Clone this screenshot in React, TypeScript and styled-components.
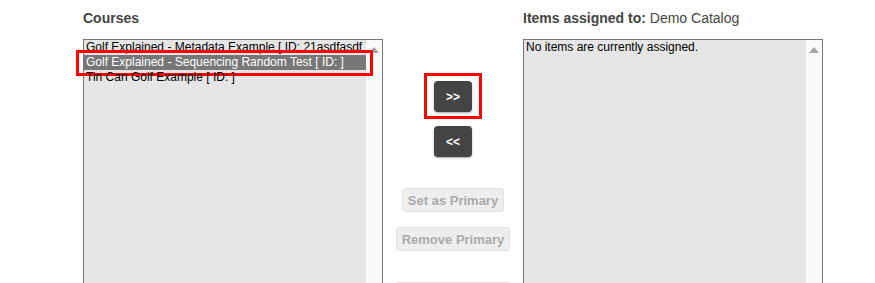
import styled, { createGlobalStyle } from 'styled-components'

const courses = [
  { id: 1, label: 'Golf Explained - Metadata Example [ ID: 21asdfasdf ]' },
  { id: 2, label: 'Golf Explained - Sequencing Random Test [ ID: ]', selected: true },
  { id: 3, label: 'Tin Can Golf Example [ ID: ]' },
]

export default function App() {
  return (
    <>
      <GlobalStyle />
      <Page>
        <Column>
          <Heading>Courses</Heading>
          <ListBox>
            <Options>
              {courses.map((c) => (
                <Option key={c.id} $selected={c.selected}>
                  <Label>{c.label}</Label>
                </Option>
              ))}
            </Options>
            <ScrollTrack>
              <ArrowUp />
            </ScrollTrack>
          </ListBox>
        </Column>

        <Middle>
          <Highlight>
            <MoveButton>&gt;&gt;</MoveButton>
          </Highlight>
          <MoveButton>&lt;&lt;</MoveButton>
          <PrimaryButton disabled $gap={31}>
            Set as Primary
          </PrimaryButton>
          <PrimaryButton disabled>Remove Primary</PrimaryButton>
          <PrimaryButton disabled $gap={31} $width={116}>
            &nbsp;
          </PrimaryButton>
        </Middle>

        <Column>
          <Heading>
            Items assigned to: <span>Demo Catalog</span>
          </Heading>
          <ListBox>
            <Options>
              <Option>
                <Label>No items are currently assigned.</Label>
              </Option>
            </Options>
            <ScrollTrack>
              <ArrowUp />
            </ScrollTrack>
          </ListBox>
        </Column>
      </Page>
    </>
  )
}

const GlobalStyle = createGlobalStyle`
  html, body {
    margin: 0;
    padding: 0;
    background: #fff;
    overflow: hidden;
  }
  body {
    font-family: "Liberation Sans", Arial, sans-serif;
  }
`

const Page = styled.div`
  display: flex;
  align-items: flex-start;
  padding: 10px 0 0 83px;
`

const Column = styled.div`
  display: flex;
  flex-direction: column;
  width: 300px;
`

const Heading = styled.div`
  font-size: 14px;
  font-weight: bold;
  line-height: 16px;
  color: #444;
  margin-bottom: 13px;

  span {
    font-weight: normal;
  }
`

const ListBox = styled.div`
  display: flex;
  height: 290px;
  border: 1px solid #767676;
`

const Options = styled.div`
  flex: 1;
  min-width: 0;
  background: #e6e6e6;
`

const Option = styled.div<{ $selected?: boolean }>`
  position: relative;
  height: 15px;
  line-height: 15px;
  font-size: 12px;
  color: ${(p) => (p.$selected ? '#fff' : '#000')};
  background: ${(p) => (p.$selected ? '#777' : 'transparent')};

  ${(p) =>
    p.$selected &&
    `
    &::after {
      content: '';
      position: absolute;
      top: -5px;
      left: -8px;
      right: -7px;
      bottom: -6px;
      border: 3px solid #f00;
      pointer-events: none;
    }
  `}
`

const Label = styled.span`
  display: block;
  padding: 0 2px;
  white-space: nowrap;
  overflow: hidden;
`

const ScrollTrack = styled.div`
  width: 16px;
  background: #fafafa;
  display: flex;
  justify-content: center;
  padding-top: 7px;
  box-sizing: border-box;
`

const ArrowUp = styled.div`
  width: 0;
  height: 0;
  border-left: 5px solid transparent;
  border-right: 5px solid transparent;
  border-bottom: 6px solid #a3a3a3;
`

const Middle = styled.div`
  width: 140px;
  display: flex;
  flex-direction: column;
  align-items: center;
  padding-top: 63px;
`

const Highlight = styled.div`
  border: 3px solid #f00;
  padding: 5px 7px 4px 7px;
  margin-bottom: 7px;
  line-height: 0;
`

const MoveButton = styled.button`
  width: 38px;
  height: 31px;
  border: none;
  border-radius: 4px;
  background: #444;
  color: #fff;
  font-family: "Liberation Sans", Arial, sans-serif;
  font-size: 12px;
  font-weight: bold;
  box-shadow: 0 1px 2px rgba(0, 0, 0, 0.35);
  cursor: pointer;
`

const PrimaryButton = styled.button<{ $gap?: number; $width?: number }>`
  height: 24px;
  margin-top: ${(p) => p.$gap ?? 15}px;
  width: ${(p) => (p.$width ? `${p.$width}px` : 'auto')};
  padding: 0 5px;
  border: 1px solid #e2e2e2;
  border-radius: 3px;
  background: #eee;
  color: #aaa;
  font-family: "Liberation Sans", Arial, sans-serif;
  font-size: 13px;
  font-weight: bold;
`
